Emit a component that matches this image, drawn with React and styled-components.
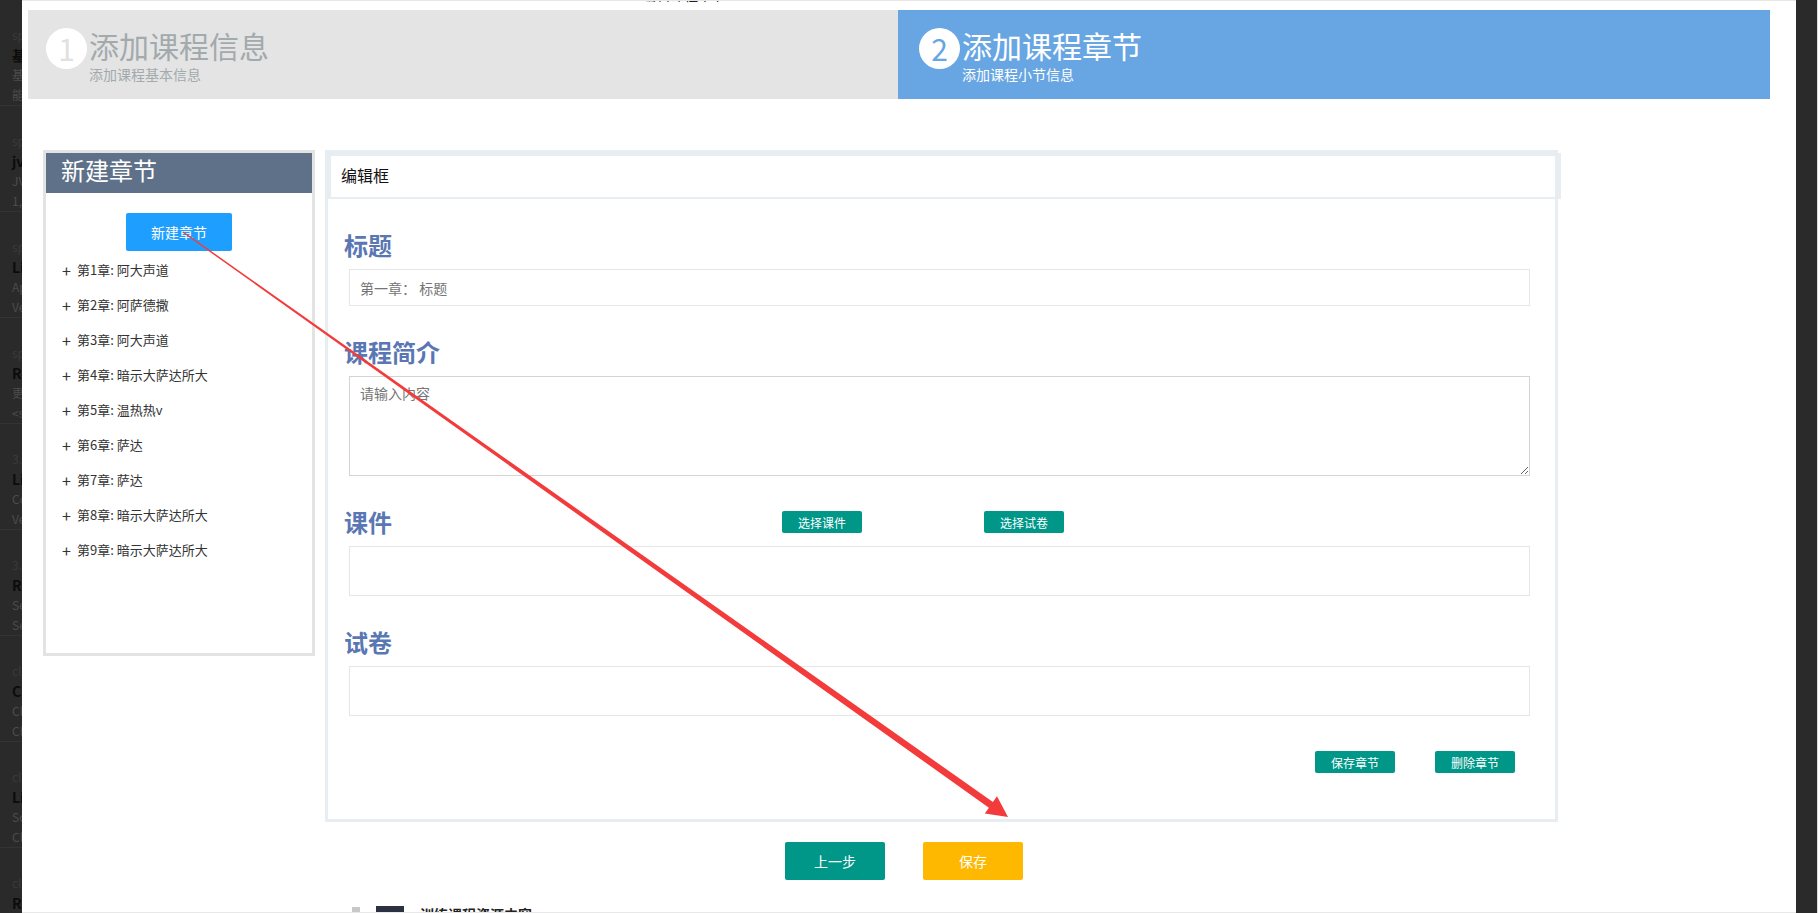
import styled, { createGlobalStyle } from 'styled-components';

const GlobalStyle = createGlobalStyle`
  html, body {
    margin: 0;
    padding: 0;
  }
  body {
    background: #2a2a2a;
    overflow: hidden;
    font-family: 'Noto Sans CJK SC', 'Noto Sans', sans-serif;
  }
  * {
    box-sizing: border-box;
  }
`;

const Page = styled.div`
  position: relative;
  display: flex;
  width: 1818px;
  height: 913px;
  overflow: hidden;
`;

const Backdrop = styled.div`
  flex: 0 0 22px;
  overflow: hidden;
  background: #2a2a2a;
  border-right: ${(p) => (p.$edge ? '1px solid #dcdcdc' : 'none')};
`;

const BgList = styled.div`
  width: 240px;
`;

const BgItem = styled.div`
  height: 106px;
  padding: 25px 0 0 12px;
  border-bottom: 1px solid #343434;
`;

const BgLine = styled.div`
  white-space: nowrap;
  line-height: 20px;
  font-size: ${(p) => (p.$kind === 'title' ? '14px' : '12px')};
  font-weight: ${(p) => (p.$kind === 'title' ? 700 : 400)};
  color: ${(p) =>
    p.$kind === 'title' ? '#0c0c0c' : p.$kind === 'label' ? '#3a3a3a' : '#4c4c4c'};
`;

const Modal = styled.div`
  flex: 1;
  height: 913px;
  background: #fff;
  border-top: 1px solid #e6e6e6;
  border-bottom: 1px solid #e8e8e8;
  overflow: hidden;
`;

const CutTitle = styled.div`
  height: 9px;
  overflow: hidden;
  padding-left: 620px;
  font-size: 14px;
  color: #222;

  div {
    margin-top: -16px;
    line-height: 18px;
  }
`;

const Steps = styled.div`
  display: grid;
  grid-template-columns: 870px 1fr;
  height: 89px;
  margin: 0 26px 0 6px;
`;

const Step = styled.div`
  display: flex;
  align-items: flex-start;
  padding: 18px 0 0 ${(p) => (p.$active ? '21px' : '18px')};
  background: ${(p) => (p.$active ? '#68a6e3' : '#e4e4e4')};
`;

const StepNum = styled.div`
  flex-shrink: 0;
  width: 41px;
  height: 41px;
  border-radius: 50%;
  background: #fff;
  color: ${(p) => (p.$active ? '#68a6e3' : '#e0e0e0')};
  font-size: 30px;
  line-height: 41px;
  text-align: center;
`;

const StepText = styled.div`
  margin: -1px 0 0 2px;
  color: ${(p) => (p.$active ? '#fff' : '#a2aaad')};
`;

const StepTitle = styled.div`
  font-size: 30px;
  line-height: 36px;
`;

const StepSub = styled.div`
  margin-top: 2px;
  font-size: 14px;
  line-height: 18px;
`;

const Body = styled.div`
  display: flex;
  align-items: flex-start;
  gap: 10px;
  margin-top: 51px;
  padding-left: 21px;
`;

const ChapterPanel = styled.div`
  width: 272px;
  height: 506px;
  border: 3px solid #e3e3e3;
`;

const PanelHeader = styled.div`
  height: 40px;
  padding-left: 15px;
  background: #5e7189;
  color: #fff;
  font-size: 24px;
  line-height: 34px;
`;

const NewButton = styled.button`
  display: block;
  width: 106px;
  height: 38px;
  margin: 20px auto 0;
  border: none;
  border-radius: 2px;
  background: #1e9fff;
  color: #fff;
  font-family: inherit;
  font-size: 14px;
`;

const ChapterList = styled.ul`
  list-style: none;
  margin: 1px 0 0;
  padding: 0 0 0 16px;
`;

const ChapterItem = styled.li`
  display: flex;
  align-items: center;
  height: 35px;
  font-size: 13px;
  color: #333;
`;

const Plus = styled.span`
  width: 15px;
  font-size: 16px;
  line-height: 1;
  color: #333;
`;

const EditorPanel = styled.div`
  width: 1233px;
  border: 3px solid #e8edf1;
  padding-bottom: 46px;
`;

const EditorHeader = styled.div`
  height: 46px;
  margin-right: -6px;
  padding-left: 10px;
  border-style: solid;
  border-color: #e8edf1;
  border-width: 3px 6px 2px 3px;
  font-size: 16px;
  font-weight: 400;
  line-height: 39px;
  color: #111;
`;

const EditorBody = styled.div`
  padding: 0 25px 0 16px;
`;

const Heading = styled.h2`
  margin: 30px 0 0;
  font-size: 24px;
  line-height: 32px;
  font-weight: 700;
  color: #5a77b3;
`;

const HeadingRow = styled.div`
  display: flex;
  align-items: center;
  margin-top: 30px;

  ${Heading} {
    margin: 0;
    width: 438px;
  }
`;

const ButtonGroup = styled.div`
  display: flex;
  gap: ${(p) => p.$gap || '10px'};
`;

const Field = styled.input`
  display: block;
  width: calc(100% - 5px);
  height: 37px;
  margin: 8px 0 0 5px;
  padding: 0 10px;
  border: 1px solid #e6e6e6;
  border-radius: 0;
  outline: none;
  font-family: inherit;
  font-size: 14px;
  color: #333;

  &::placeholder {
    color: #757575;
  }
`;

const TextArea = styled.textarea`
  display: block;
  width: calc(100% - 5px);
  height: 100px;
  margin: 8px 0 0 5px;
  padding: 6px 10px;
  border: 1px solid #d4d4d4;
  border-radius: 0;
  outline: none;
  resize: vertical;
  font-family: inherit;
  font-size: 14px;
  line-height: 20px;
  color: #333;

  &::placeholder {
    color: #757575;
  }
`;

const Box = styled.div`
  width: calc(100% - 5px);
  height: 50px;
  margin: 8px 0 0 5px;
  border: 1px solid #e6e6e6;
`;

const SmallButton = styled.button`
  width: 80px;
  height: 22px;
  padding: 0;
  border: none;
  border-radius: 2px;
  background: #009688;
  color: #fff;
  font-family: inherit;
  font-size: 12px;
`;

const Actions = styled.div`
  display: flex;
  justify-content: flex-end;
  gap: 40px;
  margin-top: 35px;
  padding-right: 15px;
`;

const Footer = styled.div`
  display: flex;
  justify-content: center;
  gap: 38px;
  margin-top: 20px;
  padding-right: 10px;
`;

const FooterButton = styled.button`
  width: 100px;
  height: 38px;
  border: none;
  border-radius: 2px;
  background: ${(p) => p.$tone};
  color: #fff;
  font-family: inherit;
  font-size: 14px;
`;

const PeekRow = styled.div`
  display: flex;
  align-items: flex-start;
  gap: 16px;
  margin-top: 24px;
  padding-left: 330px;
  height: 30px;
`;

const PeekTick = styled.span`
  width: 8px;
  height: 10px;
  margin-top: 3px;
  background: #c8c8c8;
`;

const PeekBlock = styled.span`
  width: 28px;
  height: 14px;
  margin-top: 2px;
  background: #2b3140;
`;

const PeekText = styled.span`
  font-size: 14px;
  font-weight: 700;
  line-height: 20px;
  color: #222;
`;

const Overlay = styled.svg`
  position: absolute;
  top: 0;
  left: 0;
  pointer-events: none;
`;

const backgroundCards = [
  ['springboot', '基础教程', '基础知识讲解', '能力提升'],
  ['spring', 'jvm调优', 'JVM原理', '1,2,3'],
  ['spring', 'Linux', 'Apache', 'Version'],
  ['spring', 'Redis', '更新内容', '<script>'],
  ['3.x', 'Linux', 'Config', 'Version'],
  ['3.x', 'RabbitMQ', 'Send', 'Service'],
  ['cloud', 'Cloud', 'Client', 'Cluster'],
  ['cloud', 'Linux', 'Script', 'Client'],
  ['cloud', 'Redis', 'Server', 'Cache'],
];

const chapters = [
  '阿大声道',
  '阿萨德撒',
  '阿大声道',
  '暗示大萨达所大',
  '温热热v',
  '萨达',
  '萨达',
  '暗示大萨达所大',
  '暗示大萨达所大',
];

// red annotation arrow drawn over the page
const Arrow = () => (
  <Overlay width="1818" height="913" viewBox="0 0 1818 913">
    <polygon
      points="182.6,232.5 988.9,807.8 984.8,813.5 1008,817 997,796.3 992.9,802 183.4,231.5"
      fill="#f43b3b"
    />
  </Overlay>
);

export default function App() {
  return (
    <>
      <GlobalStyle />
      <Page>
        <Backdrop>
          <BgList>
            {backgroundCards.map(([label, title, a, b], i) => (
              <BgItem key={i}>
                <BgLine $kind="label">{label}</BgLine>
                <BgLine $kind="title">{title}</BgLine>
                <BgLine>{a}</BgLine>
                <BgLine>{b}</BgLine>
              </BgItem>
            ))}
          </BgList>
        </Backdrop>

        <Modal>
          <CutTitle>
            <div>编辑课程章节</div>
          </CutTitle>

          <Steps>
            <Step>
              <StepNum>1</StepNum>
              <StepText>
                <StepTitle>添加课程信息</StepTitle>
                <StepSub>添加课程基本信息</StepSub>
              </StepText>
            </Step>
            <Step $active>
              <StepNum $active>2</StepNum>
              <StepText $active>
                <StepTitle>添加课程章节</StepTitle>
                <StepSub>添加课程小节信息</StepSub>
              </StepText>
            </Step>
          </Steps>

          <Body>
            <ChapterPanel>
              <PanelHeader>新建章节</PanelHeader>
              <NewButton>新建章节</NewButton>
              <ChapterList>
                {chapters.map((name, i) => (
                  <ChapterItem key={i}>
                    <Plus>+</Plus>
                    第{i + 1}章: {name}
                  </ChapterItem>
                ))}
              </ChapterList>
            </ChapterPanel>

            <EditorPanel>
              <EditorHeader>编辑框</EditorHeader>
              <EditorBody>
                <Heading>标题</Heading>
                <Field placeholder="第一章： 标题" />

                <Heading>课程简介</Heading>
                <TextArea placeholder="请输入内容" />

                <HeadingRow>
                  <Heading>课件</Heading>
                  <ButtonGroup $gap="122px">
                    <SmallButton>选择课件</SmallButton>
                    <SmallButton>选择试卷</SmallButton>
                  </ButtonGroup>
                </HeadingRow>
                <Box />

                <Heading>试卷</Heading>
                <Box />

                <Actions>
                  <SmallButton>保存章节</SmallButton>
                  <SmallButton>删除章节</SmallButton>
                </Actions>
              </EditorBody>
            </EditorPanel>
          </Body>

          <Footer>
            <FooterButton $tone="#009688">上一步</FooterButton>
            <FooterButton $tone="#ffb800">保存</FooterButton>
          </Footer>

          <PeekRow>
            <PeekTick />
            <PeekBlock />
            <PeekText>训练课程资源内容</PeekText>
          </PeekRow>
        </Modal>

        <Backdrop $edge />
        <Arrow />
      </Page>
    </>
  );
}
